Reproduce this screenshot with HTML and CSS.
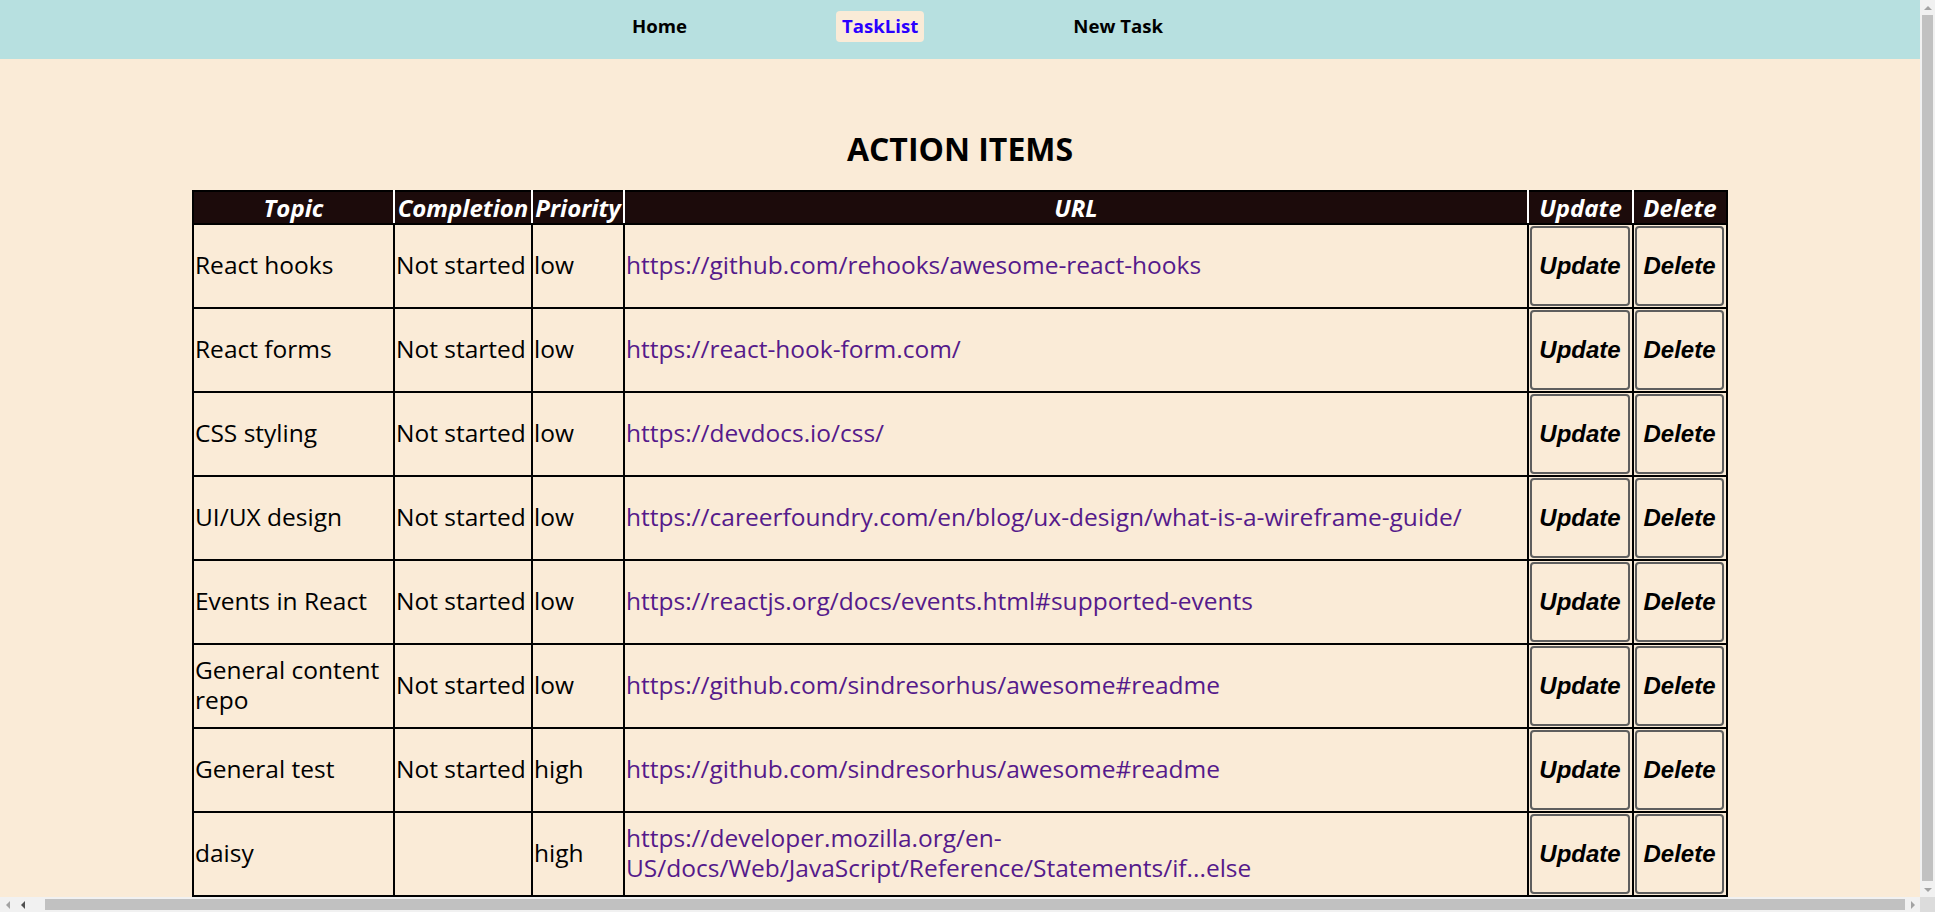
FILE: index.html
```html
<!DOCTYPE html>
<html lang="en">
<head>
<meta charset="utf-8">
<title>Task List</title>
<link rel="stylesheet" href="styles.css">
</head>
<body>
<div class="screen">
  <div class="viewport">
    <nav class="topnav">
      <a class="navlink" href="#">Home</a>
      <a class="navlink active" href="#">TaskList</a>
      <a class="navlink" href="#">New Task</a>
    </nav>
    <main class="content">
      <h2 class="title">ACTION ITEMS</h2>
      <table class="tasks">
        <colgroup>
          <col class="c-topic">
          <col class="c-completion">
          <col class="c-priority">
          <col class="c-url">
          <col class="c-update">
          <col class="c-delete">
        </colgroup>
        <thead>
          <tr><th>Topic</th><th>Completion</th><th>Priority</th><th>URL</th><th>Update</th><th>Delete</th></tr>
        </thead>
        <tbody>
          <tr><td>React hooks</td><td>Not started</td><td>low</td><td><a class="link" href="#">https://github.com/rehooks/awesome-react-hooks</a></td><td><button class="btn">Update</button></td><td><button class="btn">Delete</button></td></tr>
          <tr><td>React forms</td><td>Not started</td><td>low</td><td><a class="link" href="#">https://react-hook-form.com/</a></td><td><button class="btn">Update</button></td><td><button class="btn">Delete</button></td></tr>
          <tr><td>CSS styling</td><td>Not started</td><td>low</td><td><a class="link" href="#">https://devdocs.io/css/</a></td><td><button class="btn">Update</button></td><td><button class="btn">Delete</button></td></tr>
          <tr><td>UI/UX design</td><td>Not started</td><td>low</td><td><a class="link" href="#">https://careerfoundry.com/en/blog/ux-design/what-is-a-wireframe-guide/</a></td><td><button class="btn">Update</button></td><td><button class="btn">Delete</button></td></tr>
          <tr><td>Events in React</td><td>Not started</td><td>low</td><td><a class="link" href="#">https://reactjs.org/docs/events.html#supported-events</a></td><td><button class="btn">Update</button></td><td><button class="btn">Delete</button></td></tr>
          <tr><td>General content repo</td><td>Not started</td><td>low</td><td><a class="link" href="#">https://github.com/sindresorhus/awesome#readme</a></td><td><button class="btn">Update</button></td><td><button class="btn">Delete</button></td></tr>
          <tr><td>General test</td><td>Not started</td><td>high</td><td><a class="link" href="#">https://github.com/sindresorhus/awesome#readme</a></td><td><button class="btn">Update</button></td><td><button class="btn">Delete</button></td></tr>
          <tr><td>daisy</td><td></td><td>high</td><td><a class="link" href="#">https://developer.mozilla.org/en-US/docs/Web/JavaScript/Reference/Statements/if...else</a></td><td><button class="btn">Update</button></td><td><button class="btn">Delete</button></td></tr>
        </tbody>
      </table>
    </main>
  </div>
  <div class="vscroll">
    <div class="sb-btn"><span class="tri tri-up"></span></div>
    <div class="vthumb"></div>
    <div class="sb-btn"><span class="tri tri-down"></span></div>
  </div>
  <div class="hscroll">
    <div class="sb-btn"><span class="tri tri-left tri-light"></span></div>
    <div class="sb-btn"><span class="tri tri-left"></span></div>
    <div class="hgap"></div>
    <div class="hthumb"></div>
    <div class="sb-btn"><span class="tri tri-right tri-light"></span></div>
  </div>
  <div class="corner"></div>
</div>
</body>
</html>
```
FILE: styles.css
```css
html, body {
  margin: 0;
  padding: 0;
  height: 100%;
  overflow: hidden;
}

body {
  font-family: "Open Sans", "Noto Sans", sans-serif;
  background: #faebd7;
  color: #000;
}

.screen {
  display: grid;
  grid-template-columns: 1920px 15px;
  grid-template-rows: 897px 15px;
  width: 1935px;
  height: 912px;
}

.viewport {
  overflow: hidden;
  background: #faebd7;
}

/* ---------- navigation ---------- */
.topnav {
  height: 59px;
  box-sizing: border-box;
  background: #b7e0e0;
  display: flex;
  align-items: flex-start;
  justify-content: center;
  gap: 143px;
  padding: 11px 125px 0 0;
}

.navlink {
  font-weight: 700;
  font-size: 18.6px;
  line-height: 25px;
  padding: 2px 6px 4px;
  border-radius: 4px;
  color: #000;
  text-decoration: none;
}

.navlink.active {
  background: #faebd7;
  color: #2a00ff;
}

/* ---------- title ---------- */
.title {
  margin: 68px 0 19px;
  font-size: 32px;
  line-height: 44px;
  font-weight: 700;
  text-align: center;
}

/* ---------- table ---------- */
.tasks {
  width: 1534px;
  margin: 0 auto;
  table-layout: fixed;
  border-collapse: collapse;
  border: 2px solid #000;
  font-size: 24.5px;
}

.c-topic { width: 201px; }
.c-completion { width: 138px; }
.c-priority { width: 92px; }
.c-url { width: 904px; }
.c-update { width: 105px; }
.c-delete { width: 94px; }

.tasks th {
  background: #1c0b0b;
  color: #fff;
  font-style: italic;
  font-weight: 700;
  font-size: 24px;
  line-height: 29px;
  padding: 1px;
  text-align: center;
  white-space: nowrap;
  border: 2px solid #fff;
  border-top-color: #000;
  border-bottom-color: #000;
}

.tasks th:first-child { border-left-color: #000; }
.tasks th:last-child { border-right-color: #000; }

.tasks td {
  border: 2px solid #000;
  padding: 0 2px 2px 1px;
  line-height: 30px;
  text-align: left;
  vertical-align: middle;
}

.link {
  color: #551a8b;
  text-decoration: none;
}

.btn {
  display: block;
  width: 100%;
  height: 80px;
  margin: 1px 0 -1px;
  padding: 0;
  box-sizing: border-box;
  background: transparent;
  border: 2px solid #5e5e5e;
  border-radius: 4px;
  font-family: "Liberation Sans", Arial, sans-serif;
  font-style: italic;
  font-weight: 700;
  font-size: 24px;
  color: #000;
}

/* ---------- fake scrollbars ---------- */
.vscroll {
  background: #f1f1f1;
  display: flex;
  flex-direction: column;
  align-items: center;
}

.hscroll {
  background: #f1f1f1;
  display: flex;
  align-items: center;
}

.sb-btn {
  width: 15px;
  height: 15px;
  flex: 0 0 15px;
  display: flex;
  align-items: center;
  justify-content: center;
}

.vthumb {
  width: 11px;
  flex: 1;
  margin: 0 0 1px;
  background: #c1c1c1;
}

.hgap {
  width: 15px;
  flex: 0 0 15px;
}

.hthumb {
  flex: 1;
  height: 11px;
  background: #c1c1c1;
}

.corner {
  background: #dcdcdc;
}

.tri {
  width: 0;
  height: 0;
  border-style: solid;
  border-color: transparent;
}

.tri-up {
  border-width: 0 4px 4px 4px;
  border-bottom-color: #a3a3a3;
}

.tri-down {
  border-width: 4px 4px 0 4px;
  border-top-color: #a3a3a3;
}

.tri-left {
  border-width: 4px 4px 4px 0;
  border-right-color: #505050;
}

.tri-right {
  border-width: 4px 0 4px 4px;
  border-left-color: #505050;
}

.tri-left.tri-light { border-right-color: #a3a3a3; }
.tri-right.tri-light { border-left-color: #a3a3a3; }
```
